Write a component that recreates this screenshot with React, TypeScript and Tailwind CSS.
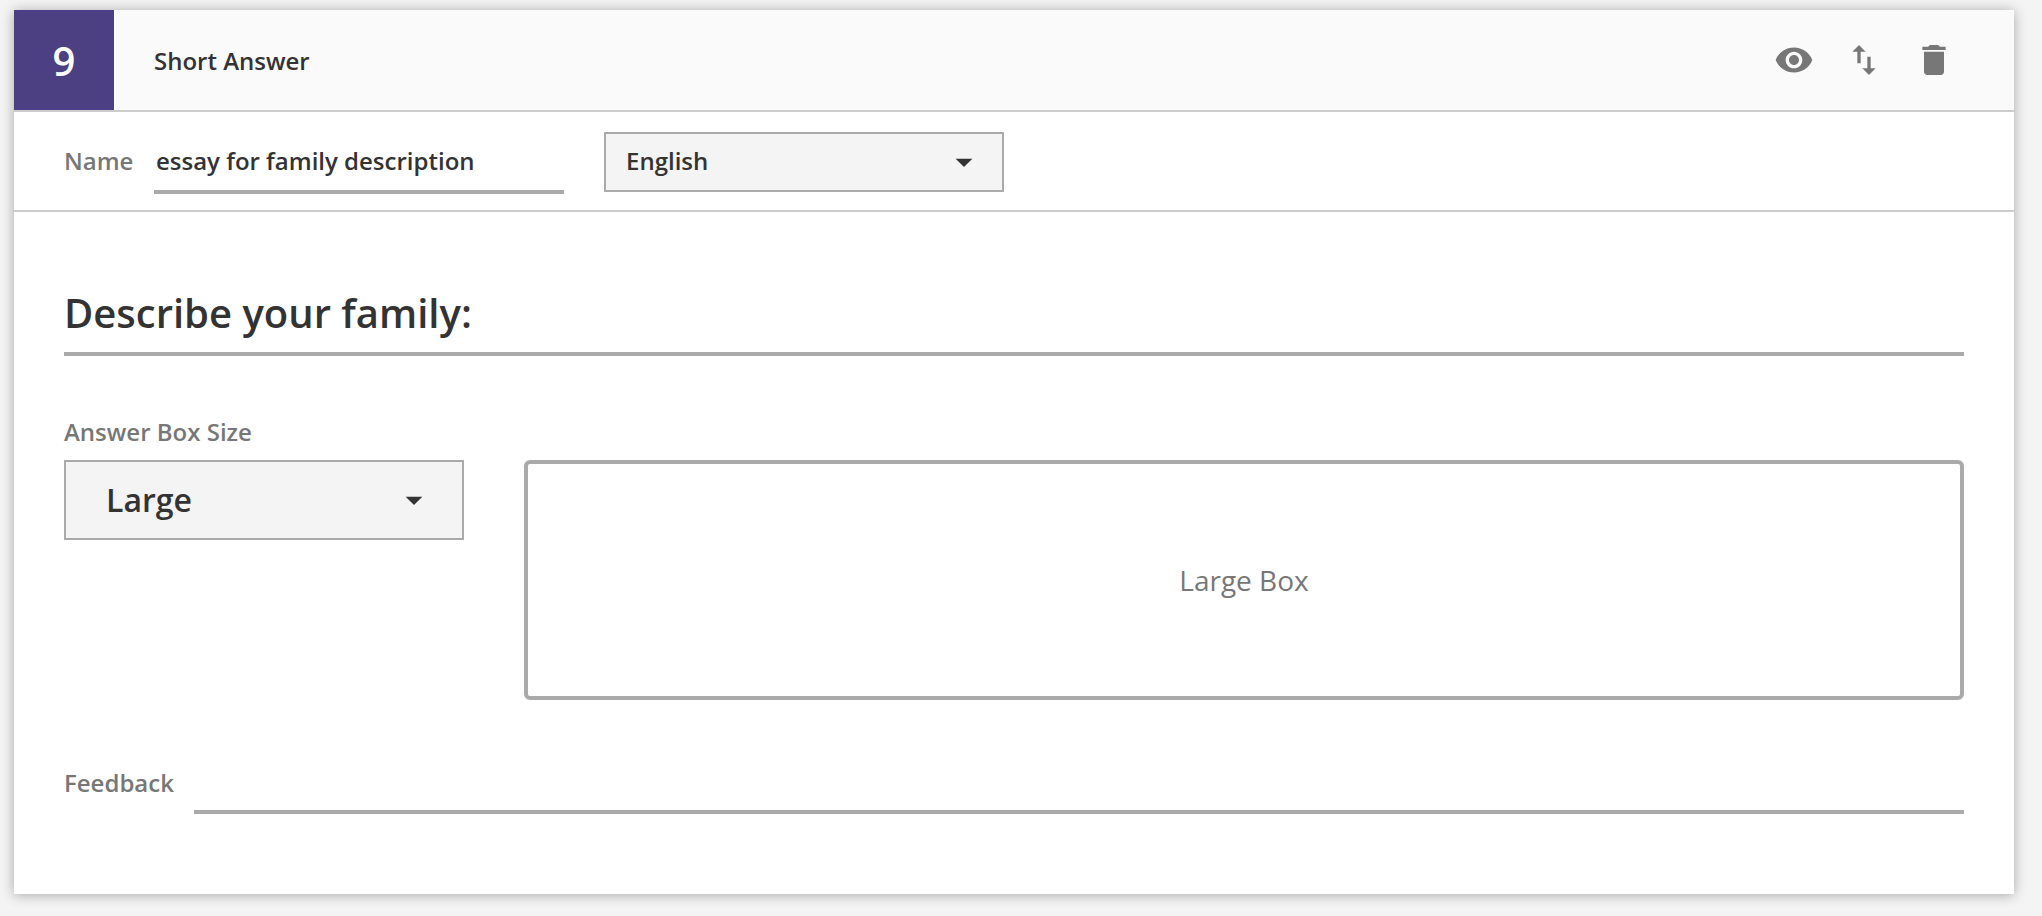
import { useState, type ReactNode } from "react";

function Icon({ path, className = "" }: { path: string; className?: string }) {
  return (
    <svg viewBox="0 0 24 24" aria-hidden="true" className={`size-10 fill-current ${className}`}>
      <path d={path} />
    </svg>
  );
}

const icons = {
  preview:
    "M12 4.5C7 4.5 2.73 7.61 1 12c1.73 4.39 6 7.5 11 7.5s9.27-3.11 11-7.5c-1.73-4.39-6-7.5-11-7.5zM12 17c-2.76 0-5-2.24-5-5s2.24-5 5-5 5 2.24 5 5-2.24 5-5 5zm0-8c-1.66 0-3 1.34-3 3s1.34 3 3 3 3-1.34 3-3-1.34-3-3-3z",
  move: "M16 17.01V10h-2v7.01h-3L15 21l4-3.99h-3zM9 3L5 6.99h3V14h2V6.99h3L9 3z",
  remove: "M6 19c0 1.1.9 2 2 2h8c1.1 0 2-.9 2-2V7H6v12zM19 4h-3.5l-1-1h-5l-1 1H5v2h14V4z",
  caret: "M7 10l5 5 5-5z",
};

function IconButton({ label, path }: { label: string; path: string }) {
  return (
    <button type="button" aria-label={label} className="cursor-pointer text-[#777]">
      <Icon path={path} />
    </button>
  );
}

function SelectShell({ children, caretClass }: { children: ReactNode; caretClass: string }) {
  return (
    <div className="relative w-[400px]">
      {children}
      <div className={`pointer-events-none absolute inset-y-0 flex items-center ${caretClass}`}>
        <Icon path={icons.caret} />
      </div>
    </div>
  );
}

export default function App() {
  const [name, setName] = useState("essay for family description");
  const [language, setLanguage] = useState("English");
  const [prompt, setPrompt] = useState("Describe your family:");
  const [size, setSize] = useState("Large");
  const [feedback, setFeedback] = useState("");

  return (
    <main className="min-h-screen bg-[#f4f4f4] pt-[10px] pr-7 pb-[22px] pl-[14px] font-['Open_Sans','Noto_Sans',sans-serif] text-2xl font-semibold text-[#333]">
      <section className="bg-white shadow-[0_1px_12px_rgba(0,0,0,0.32)]">
        <header className="flex h-[102px] items-stretch border-b-2 border-[#ccc] bg-[#fafafa]">
          <div className="flex w-[100px] items-center justify-center bg-[#4c4082] pt-0.5 text-[40px] text-white">9</div>
          <h2 className="flex flex-1 items-center pt-0.5 pl-10">Short Answer</h2>
          <div className="flex items-center gap-[30px] pr-[60px]">
            <IconButton label="Preview" path={icons.preview} />
            <IconButton label="Move" path={icons.move} />
            <IconButton label="Delete" path={icons.remove} />
          </div>
        </header>

        <div className="flex items-start border-b-2 border-[#ccc] px-[50px] pt-5 pb-4">
          <label htmlFor="name" className="w-[90px] leading-[58px] text-[#777]">
            Name
          </label>
          <input
            id="name"
            value={name}
            onChange={(e) => setName(e.target.value)}
            className="mr-10 block h-[62px] w-[410px] border-b-4 border-[#aaa] px-0.5 pb-0.5 outline-none"
          />
          <SelectShell caretClass="right-5">
            <select
              aria-label="Language"
              value={language}
              onChange={(e) => setLanguage(e.target.value)}
              className="block h-[60px] w-full appearance-none border-2 border-[#aaa] bg-[#f4f4f4] px-5 pb-0.5 outline-none"
            >
              <option>English</option>
              <option>Spanish</option>
              <option>French</option>
            </select>
          </SelectShell>
        </div>

        <div className="px-[50px] pt-[60px] pb-20">
          <input
            aria-label="Question"
            value={prompt}
            onChange={(e) => setPrompt(e.target.value)}
            className="block h-[84px] w-full border-b-4 border-[#aaa] text-[40px] outline-none"
          />

          <label htmlFor="size" className="mt-[60px] mb-3 block w-fit leading-8 text-[#777]">
            Answer Box Size
          </label>
          <div className="flex items-start gap-[60px]">
            <SelectShell caretClass="right-[30px]">
              <select
                id="size"
                value={size}
                onChange={(e) => setSize(e.target.value)}
                className="block h-20 w-full appearance-none border-2 border-[#aaa] bg-[#f4f4f4] px-10 text-[32px] outline-none"
              >
                <option>Small</option>
                <option>Medium</option>
                <option>Large</option>
              </select>
            </SelectShell>
            <div className="flex h-60 flex-1 items-center justify-center rounded-md border-4 border-[#aaa] pt-0.5 text-[28px] font-normal text-[#777]">
              {size} Box
            </div>
          </div>

          <div className="mt-14 flex items-start gap-5">
            <label htmlFor="feedback" className="leading-[54px] text-[#777]">
              Feedback
            </label>
            <input
              id="feedback"
              value={feedback}
              onChange={(e) => setFeedback(e.target.value)}
              className="block h-[58px] min-w-0 flex-1 border-b-4 border-[#aaa] outline-none"
            />
          </div>
        </div>
      </section>
    </main>
  );
}
